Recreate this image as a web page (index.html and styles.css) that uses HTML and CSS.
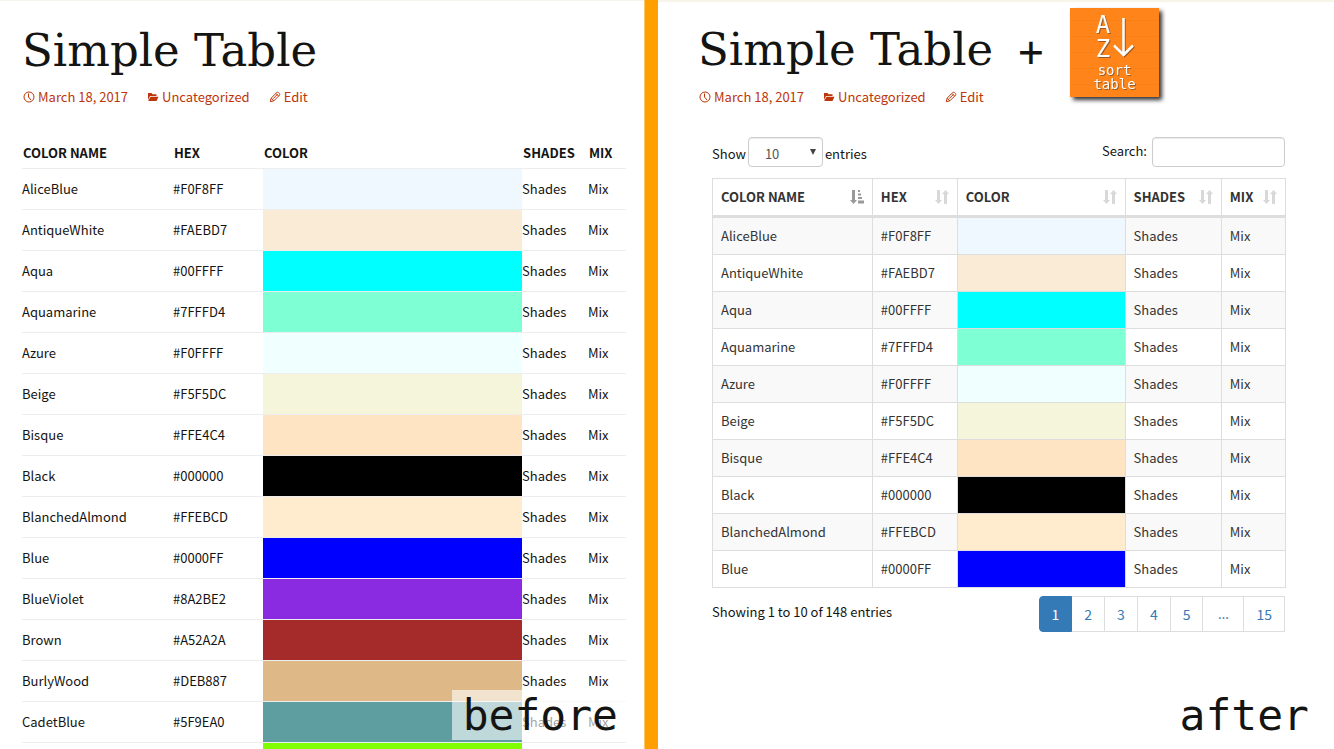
FILE: index.html
```html
<!DOCTYPE html>
<html lang="en">
<head>
<meta charset="utf-8">
<title>Simple Table</title>
<link rel="stylesheet" href="styles.css">
</head>
<body>
<svg class="defs" aria-hidden="true">
  <symbol id="clock" viewBox="0 0 12 12"><circle cx="6" cy="6" r="5" fill="none" stroke="currentColor"/><path d="M5.5 2.5V6l2.5 3" fill="none" stroke="currentColor"/></symbol>
  <symbol id="folder" viewBox="0 0 12 12"><path d="M1 2h3.500l1 1.300H9.500V5H3L1 9z M3.500 5.800H11.500L9.500 10H1.200z" fill="currentColor"/></symbol>
  <symbol id="pencil" viewBox="0 0 12 12"><path d="M1.300 10.700l.8-3.500L7.800 1.500q.8-.6 1.600 0l1.100 1.100q.6.800 0 1.600L4.800 9.900z M2.100 7.200l2.700 2.700 M4 7.800l4.500-4.500 M7 2.500l2.600 2.600" fill="none" stroke="currentColor"/></symbol>
  <symbol id="both" viewBox="0 0 14 14"><path d="M2 0h3v10h2L3.500 14 0 10h2z M9 14h3V4h2L10.500 0 7 4h2z" fill="currentColor"/></symbol>
  <symbol id="asc" viewBox="0 0 14 14"><path d="M2 0h3v10h2L3.500 14 0 10h2z M8 0h2v2H8z M8 3.500h3v2H8z M8 7h4v2H8z M8 10.500h6v3H8z" fill="currentColor"/></symbol>
</svg>
<div class="compare">
  <section class="panel before">
    <header class="heading"><h1>Simple Table</h1></header>
    <div class="meta">
      <a href="#"><svg><use href="#clock"/></svg>March 18, 2017</a>
      <a href="#"><svg><use href="#folder"/></svg>Uncategorized</a>
      <a href="#"><svg><use href="#pencil"/></svg>Edit</a>
    </div>
    <table class="plain">
      <colgroup><col class="p-name"><col class="p-hex"><col class="p-color"><col class="p-shades"><col class="p-mix"></colgroup>
      <thead><tr><th>Color name</th><th>HEX</th><th>Color</th><th>Shades</th><th>Mix</th></tr></thead>
      <tbody>
        <tr><td>AliceBlue</td><td>#F0F8FF</td><td style="background:#F0F8FF"></td><td><a href="#">Shades</a></td><td><a href="#">Mix</a></td></tr>
        <tr><td>AntiqueWhite</td><td>#FAEBD7</td><td style="background:#FAEBD7"></td><td><a href="#">Shades</a></td><td><a href="#">Mix</a></td></tr>
        <tr><td>Aqua</td><td>#00FFFF</td><td style="background:#00FFFF"></td><td><a href="#">Shades</a></td><td><a href="#">Mix</a></td></tr>
        <tr><td>Aquamarine</td><td>#7FFFD4</td><td style="background:#7FFFD4"></td><td><a href="#">Shades</a></td><td><a href="#">Mix</a></td></tr>
        <tr><td>Azure</td><td>#F0FFFF</td><td style="background:#F0FFFF"></td><td><a href="#">Shades</a></td><td><a href="#">Mix</a></td></tr>
        <tr><td>Beige</td><td>#F5F5DC</td><td style="background:#F5F5DC"></td><td><a href="#">Shades</a></td><td><a href="#">Mix</a></td></tr>
        <tr><td>Bisque</td><td>#FFE4C4</td><td style="background:#FFE4C4"></td><td><a href="#">Shades</a></td><td><a href="#">Mix</a></td></tr>
        <tr><td>Black</td><td>#000000</td><td style="background:#000000"></td><td><a href="#">Shades</a></td><td><a href="#">Mix</a></td></tr>
        <tr><td>BlanchedAlmond</td><td>#FFEBCD</td><td style="background:#FFEBCD"></td><td><a href="#">Shades</a></td><td><a href="#">Mix</a></td></tr>
        <tr><td>Blue</td><td>#0000FF</td><td style="background:#0000FF"></td><td><a href="#">Shades</a></td><td><a href="#">Mix</a></td></tr>
        <tr><td>BlueViolet</td><td>#8A2BE2</td><td style="background:#8A2BE2"></td><td><a href="#">Shades</a></td><td><a href="#">Mix</a></td></tr>
        <tr><td>Brown</td><td>#A52A2A</td><td style="background:#A52A2A"></td><td><a href="#">Shades</a></td><td><a href="#">Mix</a></td></tr>
        <tr><td>BurlyWood</td><td>#DEB887</td><td style="background:#DEB887"></td><td><a href="#">Shades</a></td><td><a href="#">Mix</a></td></tr>
        <tr><td>CadetBlue</td><td>#5F9EA0</td><td style="background:#5F9EA0"></td><td><a href="#">Shades</a></td><td><a href="#">Mix</a></td></tr>
        <tr><td></td><td></td><td style="background:#7FFF00"></td><td></td><td></td></tr>
      </tbody>
    </table>
    <p class="caption">before</p>
  </section>
  <div class="divider"></div>
  <section class="panel after">
    <header class="heading">
      <h1>Simple Table</h1>
      <span class="plus">+</span>
      <svg class="logo" viewBox="0 0 89 89" role="img" aria-label="A to Z sort table">
        <rect width="89" height="89" fill="#ff851b"/>
        <path d="M0 12.500h89M0 28.500h89M0 44.500h89M0 60.500h89M0 76.500h89" stroke="#fc8018"/>
        <g class="ink">
          <text x="33" y="25" class="big">A</text>
          <text x="33" y="49" class="big">Z</text>
          <path d="M53.500 10V46M44 37.500l9.500 9.500 9.500-9.500" fill="none" stroke="#fff" stroke-width="2.500"/>
          <text x="44.500" y="67" class="small">sort</text>
          <text x="44.500" y="81" class="small">table</text>
        </g>
      </svg>
    </header>
    <div class="meta">
      <a href="#"><svg><use href="#clock"/></svg>March 18, 2017</a>
      <a href="#"><svg><use href="#folder"/></svg>Uncategorized</a>
      <a href="#"><svg><use href="#pencil"/></svg>Edit</a>
    </div>
    <div class="data">
      <div class="controls">
        <div class="length"><label for="len">Show</label>
          <span class="pick"><select id="len"><option>10</option><option>25</option><option>50</option></select><svg viewBox="0 0 8 7"><path d="M1 0h6L4 6z" fill="#444"/></svg></span>
          <span>entries</span></div>
        <div class="search"><label for="q">Search:</label><input id="q" type="search"></div>
      </div>
      <table class="sortable">
        <colgroup><col class="s-name"><col class="s-hex"><col class="s-color"><col class="s-shades"><col class="s-mix"></colgroup>
        <thead><tr>
          <th><div class="th on">Color name<svg><use href="#asc"/></svg></div></th>
          <th><div class="th">HEX<svg><use href="#both"/></svg></div></th>
          <th><div class="th">Color<svg><use href="#both"/></svg></div></th>
          <th><div class="th">Shades<svg><use href="#both"/></svg></div></th>
          <th><div class="th">Mix<svg><use href="#both"/></svg></div></th>
        </tr></thead>
        <tbody>
          <tr><td>AliceBlue</td><td>#F0F8FF</td><td style="background:#F0F8FF"></td><td><a href="#">Shades</a></td><td><a href="#">Mix</a></td></tr>
          <tr><td>AntiqueWhite</td><td>#FAEBD7</td><td style="background:#FAEBD7"></td><td><a href="#">Shades</a></td><td><a href="#">Mix</a></td></tr>
          <tr><td>Aqua</td><td>#00FFFF</td><td style="background:#00FFFF"></td><td><a href="#">Shades</a></td><td><a href="#">Mix</a></td></tr>
          <tr><td>Aquamarine</td><td>#7FFFD4</td><td style="background:#7FFFD4"></td><td><a href="#">Shades</a></td><td><a href="#">Mix</a></td></tr>
          <tr><td>Azure</td><td>#F0FFFF</td><td style="background:#F0FFFF"></td><td><a href="#">Shades</a></td><td><a href="#">Mix</a></td></tr>
          <tr><td>Beige</td><td>#F5F5DC</td><td style="background:#F5F5DC"></td><td><a href="#">Shades</a></td><td><a href="#">Mix</a></td></tr>
          <tr><td>Bisque</td><td>#FFE4C4</td><td style="background:#FFE4C4"></td><td><a href="#">Shades</a></td><td><a href="#">Mix</a></td></tr>
          <tr><td>Black</td><td>#000000</td><td style="background:#000000"></td><td><a href="#">Shades</a></td><td><a href="#">Mix</a></td></tr>
          <tr><td>BlanchedAlmond</td><td>#FFEBCD</td><td style="background:#FFEBCD"></td><td><a href="#">Shades</a></td><td><a href="#">Mix</a></td></tr>
          <tr><td>Blue</td><td>#0000FF</td><td style="background:#0000FF"></td><td><a href="#">Shades</a></td><td><a href="#">Mix</a></td></tr>
        </tbody>
      </table>
      <div class="footer">
        <span>Showing 1 to 10 of 148 entries</span>
        <nav class="pages" aria-label="Pages">
          <a class="current" href="#">1</a><a href="#">2</a><a href="#">3</a><a href="#">4</a><a href="#">5</a><span class="more">…</span><a href="#">15</a>
        </nav>
      </div>
    </div>
    <p class="caption">after</p>
  </section>
</div>
</body>
</html>
```
FILE: styles.css
```css
* { box-sizing: border-box; }
body {
  margin: 0;
  background: #fff;
  color: #141412;
  font: 13px/20px "Noto Sans CJK SC", sans-serif;
}
a { color: inherit; text-decoration: none; }
.defs { display: none; }

.compare {
  display: grid;
  grid-template-columns: 644fr 14px 676fr;
  grid-template-rows: 100%;
  height: 100vh;
}
.panel { position: relative; min-width: 0; overflow: hidden; border-top: 1px solid #f7f5e7; }
.before { padding: 0 18px 0 22px; }
.after { padding: 0 48px 0 40px; border-top-width: 2px; }
.divider { background: #ff9f00; border-left: 1px solid #ffc566; }

.heading { display: flex; align-items: flex-start; height: 86px; }
.after .heading { height: 85px; }
h1 {
  margin: 0;
  padding-top: 20px;
  font: 400 45px/60px "DejaVu Serif", serif;
  white-space: nowrap;
}
.after h1 { padding-top: 18px; }
.plus { margin: 20px 26px 0 25px; font: 42px/60px "DejaVu Sans Mono", monospace; }
.logo { width: 89px; height: 89px; margin-top: 6px; flex: none; filter: drop-shadow(3px 3px 2px #333); }
.ink { fill: #fff; text-anchor: middle; font-family: "DejaVu Sans Mono", monospace; filter: drop-shadow(1px 1px 0 #a05a20); }
.big { font-size: 24px; }
.small { font-size: 14px; }

.meta { display: flex; gap: 18px; color: #bc360a; }
.meta a { display: flex; align-items: center; gap: 3px; }
.meta svg { width: 12px; height: 12px; margin-left: 1px; }

table { width: 100%; table-layout: fixed; border-spacing: 0; text-align: left; }
th { text-transform: uppercase; font-weight: 700; }

.plain { margin-top: 36px; }
.plain th { height: 25px; padding: 0 0 5px 1px; }
.plain td { height: 41px; padding: 0; border-top: 1px solid #ededed; background-clip: padding-box !important; }
.p-name { width: 25%; }
.p-hex { width: 14.9%; }
.p-color { width: 42.9%; }
.p-shades { width: 10.9%; }
.p-mix { width: 6.3%; }

.caption {
  position: absolute;
  margin: 0;
  font: 43px/50px "DejaVu Sans Mono", monospace;
}
.before .caption { right: 18px; bottom: 9px; padding: 0 8px 0 11px; background: rgba(255, 255, 255, 0.6); }
.after .caption { right: 25px; bottom: 9px; }

.data { margin: 30px 0 0 14px; }
.controls { display: flex; justify-content: space-between; }
.length { display: flex; gap: 2px; line-height: 34px; }
.search { display: flex; gap: 5px; padding-right: 1px; line-height: 28px; }
.pick { position: relative; height: 30px; width: 75px; line-height: 0; }
.pick svg { position: absolute; right: 6px; top: 12px; width: 8px; height: 7px; pointer-events: none; }
select, input {
  height: 30px;
  border: 1px solid #ccc;
  border-radius: 4px;
  background: #fff;
  color: #555;
  font: inherit;
  box-shadow: inset 0 1px 1px rgba(0, 0, 0, 0.08);
}
select { width: 100%; padding: 4px 16px 0; line-height: 20px; appearance: none; }
input { width: 133px; padding: 4px 8px; }

.sortable { margin-top: 7px; color: #333; border: 1px solid #ddd; border-width: 1px 0 0 1px; }
.sortable th { height: 39px; padding: 0 8px; border-right: 1px solid #ddd; border-bottom: 3px solid #ddd; }
.sortable td { height: 37px; padding: 0 8px; border-right: 1px solid #ddd; border-bottom: 1px solid #ddd; }
.sortable tbody tr:nth-child(odd) { background: #f9f9f9; }
.th { display: flex; justify-content: space-between; align-items: center; white-space: nowrap; }
.th svg { width: 14px; height: 14px; color: #d8d8d8; }
.th.on svg { color: #999; }
.s-name { width: 27.9%; }
.s-hex { width: 14.8%; }
.s-color { width: 29.3%; }
.s-shades { width: 16.8%; }
.s-mix { width: 11.2%; }

.footer { display: flex; justify-content: space-between; margin-top: 8px; padding-right: 1px; line-height: 32px; }
.pages { display: flex; font-size: 14px; line-height: 34px; color: #337ab7; }
.pages > * { padding: 0 12px; border: 1px solid #ddd; border-left: 0; height: 36px; }
.pages .current { background: #337ab7; border-color: #337ab7; color: #fff; border-left: 1px solid #337ab7; border-radius: 4px 0 0 4px; }
.pages .more { min-width: 41px; text-align: center; font-family: "Open Sans", sans-serif; }
```
